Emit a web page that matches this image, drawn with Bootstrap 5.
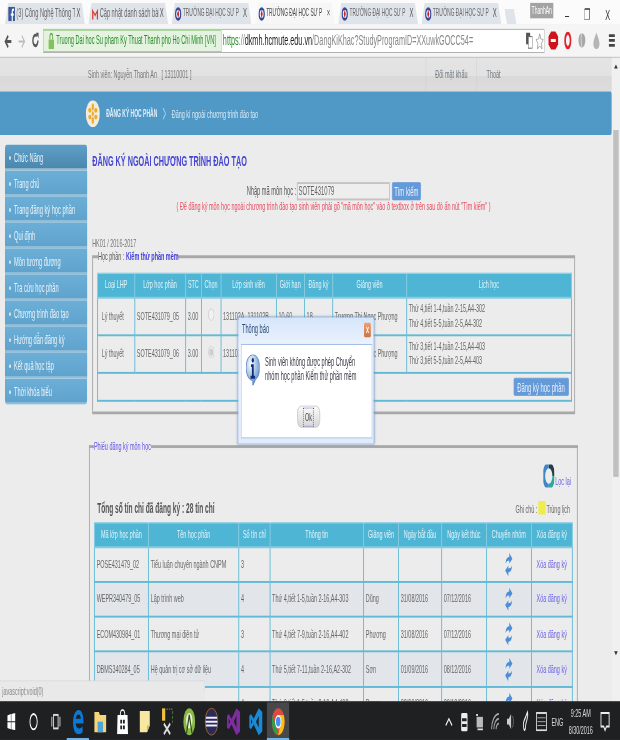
<!DOCTYPE html>
<html lang="vi">
<head>
<meta charset="utf-8">
<title>Đăng ký ngoài chương trình đào tạo</title>
<link rel="stylesheet" href="https://cdn.jsdelivr.net/npm/bootstrap@5.3.0/dist/css/bootstrap.min.css">
<style>
html,body{margin:0;width:620px;height:740px;overflow:hidden;background:#ececec}
body{font-family:"Liberation Sans",Arial,sans-serif;font-size:12px;color:#666}
.frame{width:620px;height:740px;overflow:hidden;filter:blur(.45px)}
.stage{width:1366px;height:768px;transform:scale(.4539,.9635);transform-origin:0 0;position:relative;overflow:hidden;background:#ececec}
.tabbar{height:25px;background:#fbfbfb;padding-left:11px}
.tabtab{width:176px;height:22px;margin-top:3px;margin-right:7.5px;padding:0 10px 0 7px;background:#dfe3ea;clip-path:polygon(0 100%,7px 0,calc(100% - 7px) 0,100% 100%);color:#666;font-size:12.5px;white-space:nowrap;overflow:hidden}
.tabtab.isactive{background:#f6f6f6;color:#444}
.tabtab .tname{flex:1;margin-left:3px;overflow:hidden}
.tabtab.capstab .tname{font-size:10.5px}
.tabtab .tx{color:#555;font-size:13px;margin-left:3px}
.newtab{width:27px;height:16px;margin-top:9px;background:#dfe3ea;margin-left:-1px;clip-path:polygon(0 0,calc(100% - 6px) 0,100% 100%,6px 100%)}
.userbtn{position:absolute;left:1168px;top:3px;width:51px;height:16px;background:#a3a3a3;color:#fff;text-align:center;line-height:16px;font-size:11px}
.winctl{position:absolute;top:4px;color:#333;font-size:16px;line-height:24px;width:28px;text-align:center}
.wmin{left:1235px}.wmax{left:1279px}.wcls{left:1325px}
.toolbar{height:35px;background:#f5f5f5;border-bottom:1px solid #b9b9b9;padding-left:3px}
.navbtn{width:30px;text-align:center}
.urlbox{width:1105px;height:25px;margin-left:2px;background:#fff;border:1px solid #b0b0b0;font-size:16px;color:#333;white-space:nowrap}
.evbadge{width:392px;height:23px;margin-right:3px;background:#e3f3df;border:1px solid #9ed092;color:#2b8a2b;font-size:12.4px;padding-left:9px}
.urlhttps{color:#2b8a2b}.urlhost{color:#222}.urlrest{color:#888}
.toolright{padding-right:1px;gap:6px}
.viewport{height:668px}
.pagecol{width:1348px;overflow:hidden}
.scrolltrack{width:18px;background:#f0f0f0}
.sbtop{width:0;height:0;border:4px solid transparent;border-top:0;border-bottom-color:#333;margin:7px auto 0}
.sbthumb{width:12px;height:360px;background:#c0c0c0;margin:64px auto 0}
.sbdown{width:0;height:0;border:4px solid transparent;border-bottom:0;border-top-color:#333;margin:181px auto 0}
.strip{height:35px;background:linear-gradient(#e4e4e4 0,#e2e2e2 55%,#d9d9d9 55%,#dcdcdc 100%);padding-left:194px;color:#777;line-height:35px;white-space:nowrap}
.stripcell{border-left:1px solid #cfcfcf;height:35px}
.cpass{width:112px;text-align:center}.cout{width:298px;padding-left:21px}
.bluebar{height:45px;background:#5098c6;color:#dcebf5;padding-left:189px;white-space:nowrap;border-radius:0 3px 3px 0}
.crumbmain{font-weight:700;font-size:11px;margin-left:14px;color:#e6f0f7}
.crumbsep{margin:0 12px}
.sidemenu{width:181px;margin:10px 0 0 11px;--bs-list-group-bg:transparent;--bs-list-group-border-width:0;--bs-list-group-border-radius:5px}
.sidemenu .list-group-item{height:27px;line-height:29px;padding:0 0 0 10px;background:linear-gradient(#6caed6,#5fa3cd);color:#eaf3f8;border-bottom:2px solid #8ec0dd;font-size:12.5px;white-space:nowrap;overflow:hidden}
.sidemenu .list-group-item.menuhead{background:linear-gradient(#5e9fc9,#4b87ad)}
.sidemenu .list-group-item::before{content:"";display:inline-block;width:4px;height:4px;border-radius:50%;background:#dfeef6;margin:0 7px 2px -1px}
.maincol{width:1064px;margin-left:11px}
.pagehead{font-size:16px;font-weight:700;color:#4646d2;margin:17px 0 0;line-height:20px;white-space:nowrap}
.searchrow{margin-top:11px;height:20px;color:#555;font-size:12.5px}
.codeinput{width:205px;height:19px;margin-left:1px;border:2px solid #c4c4c4;background:#eee;color:#666;font-size:13px;padding:0 2px}
.bluebtn{--bs-btn-color:#e8f0fb;--bs-btn-bg:#659ad9;--bs-btn-border-color:#659ad9;--bs-btn-hover-bg:#659ad9;--bs-btn-hover-color:#e8f0fb;--bs-btn-padding-x:0;--bs-btn-padding-y:0;--bs-btn-font-size:13px;--bs-btn-border-radius:2px;--bs-btn-line-height:17px}
.searchbtn{width:63px;height:19px;margin-left:5px}
.rednote{color:#e74b5c;margin-top:-1px;line-height:14px}
.termline{margin-top:24px;line-height:14px;color:#777}
.boxset{border:2px solid #a8a8a8;border-width:3px 2px 3px 2px;min-width:0;margin:0;height:171px}
.boxset legend{float:none;width:auto;font-size:12px;line-height:14px;margin:0 0 0 2px;padding:0;color:#555}
.subjname{color:#3d3ddb;font-weight:700}
.boxone{margin-top:0;padding:0 8px 0 9px}
.boxtwo{margin-top:26px;margin-left:-7px;width:1077px;height:400px;padding:0 9px 0 9px;border-bottom:0}
.boxset.boxtwo legend{color:#5f52e8;margin-left:0}
.regtable{table-layout:fixed;margin:0;--bs-table-bg:transparent;--bs-table-color:#666;--bs-border-color:#62bad6;border-color:#62bad6;border-width:2px;font-size:12px}
.regtable>:not(caption)>*>*{padding:0 4px;vertical-align:middle;border-width:1px 2px 2px 2px;border-color:#62bad6;line-height:15px}
.regtable thead th{background:#4fb5d5;color:#e4f4fa;font-weight:400;text-align:center;height:25px;white-space:nowrap;border-color:#83cbe1}
.t1{margin-top:10px;width:1043px}
.t1 tbody tr{height:39px}
.t1 td:first-child{padding-left:8px}
.t1 .footrow{height:29px}
.t1 .footrow td{padding:0 5px 0 0;text-align:right}
.sumbtn{display:block;margin-left:auto;width:121px;height:19px;--bs-btn-line-height:19px}
.tc{text-align:center}
.c1a{width:81.5px}.c1b{width:112px}.c1c{width:35px}.c1d{width:43px}.c1e{width:122px}.c1f{width:62px}.c1g{width:62px}.c1h{width:163px}.c1i{width:363px}
.t2{width:1053px}
.t2 tbody tr{height:36.3px}
.t2 tbody tr:nth-child(even) td{background:#e2e6ea}
.c2a{width:119px}.c2b{width:199px}.c2c{width:68.5px}.c2d{width:206.5px}.c2e{width:77px}.c2f{width:94.5px}.c2g{width:99px}.c2h{width:99px}.c2i{width:90px}
.delete{color:#6a60e6;text-decoration:none}
.refreshrow{height:24px;margin-top:12px;padding-right:4px}
.refreshlink{color:#6a60e6;line-height:14px;margin-left:2px;text-decoration:none}
.summary{height:24px;margin-top:6px;margin-bottom:6px}
.totaltext{font-size:14.5px;font-weight:700;color:#555;margin-left:7px;padding-top:5px}
.yellowmark{display:inline-block;width:16px;height:14px;background:#f0ec4a;margin:0 2px;vertical-align:-2px}
.notetext{color:#666;padding-right:6px;padding-top:7px}
.statusbub{position:absolute;left:0;top:706px;width:452px;height:23px;background:#e9e9e9;border:1px solid #d4d4d4;border-left:0;border-radius:0 3px 0 0;line-height:21px;padding-left:5px;color:#888;z-index:5}
.taskbar{height:40px;background:#1f2022;color:#ddd;position:relative;z-index:6;border-top:1px solid #2a2a2a}
.taskbtn{width:49px;height:39px;position:relative}
.taskbtn.ison::after{content:"";position:absolute;left:0;right:0;bottom:0;height:2px;background:#76b9ed}
.taskbtn.lit{background:#47484a}
.trayitem{width:34px;height:39px}
.traylang{width:36px;height:39px;font-size:12px}
.trayclock{width:67px;font-size:12px;line-height:18px;text-align:center}
.traynote{width:40px;height:39px;margin-right:13px}
.dlgbox{position:absolute;left:524px;top:329px;width:300px;height:132px;background:linear-gradient(#d6e6fb,#eef4fd 25%,#dfeafa);border:1px solid #a9c4e8;border-radius:3px;z-index:4;padding:0 3px 5px 6px;box-shadow:0 0 3px rgba(90,130,190,.5)}
.dlgtitle{height:27px;line-height:24px;color:#2d4a78;font-size:12.5px;padding-left:2px}
.dlgclose{position:absolute;right:6px;top:5px;width:15px;height:15px;border-radius:2px;background:linear-gradient(#f0a070,#d0703f);color:#fff;font-weight:700;font-size:12px;line-height:15px;text-align:center}
.dlgbody{background:#fff;border:1px solid #9fbce6;height:98px;padding:10px 8px 0 10px;color:#3a3a48}
.dlgmsg{line-height:14px;margin:1px 0 0 12px;font-size:12.4px}
.okbtn{display:block;width:50px;height:23px;margin:21px auto 0;padding:0;transform:translateX(3px);background:linear-gradient(#fafafa,#d6d6d6);border:1px solid #bcbcbc;border-radius:8px;color:#444;font-size:12px;line-height:18px}
.okinner{display:inline-block;border:1px dotted #4646c8;padding:0 3px;line-height:18px}
</style>
</head>
<body>
<div class="frame">
<div class="stage d-flex flex-column">
  <div class="tabbar d-flex flex-shrink-0">
    <div class="tabtab d-flex align-items-center"><svg width="15" height="15" viewBox="0 0 16 16"><rect width="16" height="16" rx="1" fill="#3b5998"/><path d="M11 16V10h2l.4-2.6H11V6c0-.8.3-1.3 1.3-1.3h1.2V2.3C13 2.2 12.3 2 11.5 2 9.6 2 8.3 3.2 8.3 5.4v2H6.2V10h2.1v6z" fill="#fff"/></svg><span class="tname">(3) Công Nghệ Thông Ti</span><span class="tx">X</span></div>
    <div class="tabtab d-flex align-items-center"><svg width="15" height="15" viewBox="0 0 16 16"><path d="M1 14V2l7 6 7-6v12h-3V7L8 11 4 7v7z" fill="#d8432f"/></svg><span class="tname">Cập nhật danh sách bài</span><span class="tx">X</span></div>
    <div class="tabtab capstab d-flex align-items-center"><svg width="15" height="15" viewBox="0 0 16 16"><circle cx="8" cy="8" r="7.5" fill="#2f4a9c"/><circle cx="8" cy="8" r="4.5" fill="#fff"/><path d="M8 3l2.5 5L8 13 5.500 8z" fill="#c8242c"/></svg><span class="tname">TRƯỜNG ĐẠI HỌC SƯ P</span><span class="tx">X</span></div>
    <div class="tabtab capstab isactive d-flex align-items-center"><svg width="15" height="15" viewBox="0 0 16 16"><circle cx="8" cy="8" r="7.5" fill="#2f4a9c"/><circle cx="8" cy="8" r="4.5" fill="#fff"/><path d="M8 3l2.5 5L8 13 5.500 8z" fill="#c8242c"/></svg><span class="tname">TRƯỜNG ĐẠI HỌC SƯ P</span><span class="tx">×</span></div>
    <div class="tabtab capstab d-flex align-items-center"><svg width="15" height="15" viewBox="0 0 16 16"><circle cx="8" cy="8" r="7.5" fill="#2f4a9c"/><circle cx="8" cy="8" r="4.5" fill="#fff"/><path d="M8 3l2.5 5L8 13 5.500 8z" fill="#c8242c"/></svg><span class="tname">TRƯỜNG ĐẠI HỌC SƯ P</span><span class="tx">X</span></div>
    <div class="tabtab capstab d-flex align-items-center"><svg width="15" height="15" viewBox="0 0 16 16"><circle cx="8" cy="8" r="7.5" fill="#2f4a9c"/><circle cx="8" cy="8" r="4.5" fill="#fff"/><path d="M8 3l2.5 5L8 13 5.500 8z" fill="#c8242c"/></svg><span class="tname">TRƯỜNG ĐẠI HỌC SƯ P</span><span class="tx">X</span></div>
    <div class="newtab"></div>
  </div>
  <div class="userbtn">ThanhAn</div>
  <div class="winctl wmin">–</div><div class="winctl wmax">❐</div><div class="winctl wcls">X</div>
  <div class="toolbar d-flex align-items-center flex-shrink-0">
    <div class="navbtn"><svg width="18" height="16" viewBox="0 0 18 16"><path d="M16 8H4M9 2 3 8l6 6" fill="none" stroke="#555" stroke-width="3"/></svg></div>
    <div class="navbtn"><svg width="18" height="16" viewBox="0 0 18 16"><path d="M2 8h12M9 2l6 6-6 6" fill="none" stroke="#bbb" stroke-width="2"/></svg></div>
    <div class="navbtn"><svg width="18" height="18" viewBox="0 0 18 18"><path d="M14.500 9A5.500 5.500 0 1 1 12 4.400" fill="none" stroke="#555" stroke-width="3"/><path d="M10 1h6v6z" fill="#555"/></svg></div>
    <div class="urlbox d-flex align-items-center">
      <div class="evbadge d-flex align-items-center flex-shrink-0"><svg class="me-1" width="14" height="18" viewBox="0 0 14 18"><path d="M4 8V5a3 3 0 0 1 6 0v3" fill="none" stroke="#6dae4f" stroke-width="2"/><rect x="1" y="8" width="12" height="10" fill="#86c25c"/></svg>Truong Dai hoc Su pham Ky Thuat Thanh pho Ho Chi Minh [VN]</div>
      <span class="urlhttps">https</span><span class="urlrest">://</span><span class="urlhost">dkmh.hcmute.edu.vn</span><span class="urlrest">/DangKiKhac?StudyProgramID=XXuwkGOCC54=</span>
      <div class="toolright d-flex align-items-center ms-auto">
        <svg width="16" height="18" viewBox="0 0 16 18"><rect x="1" y="1" width="9" height="12" fill="#555"/><rect x="6" y="5" width="9" height="12" fill="#fff" stroke="#666"/></svg>
        <svg width="18" height="19" viewBox="0 0 22 20"><path d="M11 1l3 6.500 7 .8-5.200 4.800L17.200 20 11 16.400 4.800 20l1.400-6.900L1 8.300l7-.8z" fill="#fff" stroke="#777"/></svg>
      </div>
    </div>
    <div class="d-flex align-items-center gap-2 flex-shrink-0 ms-2">
      <svg width="22" height="20" viewBox="0 0 28 24"><path d="M8 0h12l8 7v10l-8 7H8l-8-7V7z" fill="#d0121b"/><rect x="7" y="10" width="14" height="4" fill="#fff"/></svg>
      <svg class="ms-1" width="18" height="18" viewBox="0 0 22 24"><ellipse cx="11" cy="12" rx="8" ry="10" fill="none" stroke="#e0232c" stroke-width="5"/></svg>
      <svg class="ms-1" width="20" height="18" viewBox="0 0 24 24"><circle cx="12" cy="12" r="10" fill="#a8a8a8"/><path d="M12 2c-3 5-3 9 0 20" stroke="#fff" fill="none"/></svg>
      <svg class="ms-1" width="20" height="18" viewBox="0 0 24 24"><path d="M12 1c5 7 9 11 9 16a9 7 0 0 1-18 0C3 12 7 8 12 1z" fill="#b5b5b5"/></svg>
      <svg class="ms-2" width="16" height="16" viewBox="0 0 18 22"><path d="M0 4h18M0 11h18M0 18h18" stroke="#444" stroke-width="4"/></svg>
    </div>
  </div>
  <div class="viewport d-flex flex-shrink-0">
    <div class="pagecol">
      <div class="strip d-flex">
        <span>Sinh viên: Nguyễn Thanh An &nbsp; [ 13110001 ]</span>
        <a class="stripcell cpass ms-auto text-decoration-none text-secondary" href="#">Đổi mật khẩu</a>
        <a class="stripcell cout text-decoration-none text-secondary" href="#">Thoát</a>
      </div>
      <div class="bluebar d-flex align-items-center">
        <svg width="31" height="28" viewBox="0 0 31 28"><ellipse cx="15.500" cy="14" rx="15.500" ry="14" fill="#f2ecd8"/><g fill="#eeaa33"><ellipse cx="15.500" cy="7" rx="2.500" ry="3.500"/><ellipse cx="15.500" cy="21" rx="2.500" ry="3.500"/><ellipse cx="9" cy="10.500" rx="3.500" ry="2.500"/><ellipse cx="22" cy="10.500" rx="3.500" ry="2.500"/><ellipse cx="9" cy="17.500" rx="3.500" ry="2.500"/><ellipse cx="22" cy="17.500" rx="3.500" ry="2.500"/><circle cx="15.500" cy="14" r="2.500"/></g></svg>
        <span class="crumbmain">ĐĂNG KÝ HỌC PHẦN</span><svg class="crumbsep" width="8" height="14" viewBox="0 0 8 14"><path d="M1 1l6 6-6 6" fill="none" stroke="#dcebf5"/></svg><span>Đăng kí ngoài chương trình đào tạo</span>
      </div>
      <div class="d-flex">
        <div class="sidemenu list-group flex-shrink-0">
          <a class="list-group-item menuhead" href="#">Chức Năng</a>
          <a class="list-group-item" href="#">Trang chủ</a>
          <a class="list-group-item" href="#">Trang đăng ký học phần</a>
          <a class="list-group-item" href="#">Qui định</a>
          <a class="list-group-item" href="#">Môn tương đương</a>
          <a class="list-group-item" href="#">Tra cứu học phần</a>
          <a class="list-group-item" href="#">Chương trình đào tạo</a>
          <a class="list-group-item" href="#">Hướng dẫn đăng ký</a>
          <a class="list-group-item" href="#">Kết quả học tập</a>
          <a class="list-group-item" href="#">Thời khóa biểu</a>
        </div>
        <div class="maincol flex-shrink-0">
          <h1 class="pagehead">ĐĂNG KÝ NGOÀI CHƯƠNG TRÌNH ĐÀO TẠO</h1>
          <div class="searchrow d-flex justify-content-center align-items-center">Nhập mã môn học :<input class="codeinput" type="text" value="SOTE431079"><button class="btn bluebtn searchbtn" type="button">Tìm kiếm</button></div>
          <div class="rednote text-center">( Để đăng ký môn học ngoài chương trình đào tạo sinh viên phải gõ "mã môn học" vào ô textbox ở trên sau đó ấn nút "Tìm kiếm" )</div>
          <div class="termline">HK01 / 2016-2017</div>
          <fieldset class="boxset boxone">
            <legend>Học phần : <span class="subjname">Kiểm thử phần mềm</span></legend>
            <table class="table table-bordered regtable t1">
              <colgroup><col class="c1a"><col class="c1b"><col class="c1c"><col class="c1d"><col class="c1e"><col class="c1f"><col class="c1g"><col class="c1h"><col class="c1i"></colgroup>
              <thead><tr><th>Loại LHP</th><th>Lớp học phần</th><th>STC</th><th>Chọn</th><th>Lớp sinh viên</th><th>Giới hạn</th><th>Đăng ký</th><th>Giảng viên</th><th>Lịch học</th></tr></thead>
              <tbody>
                <tr><td>Lý thuyết</td><td>SOTE431079_05</td><td>3.00</td><td class="tc"><input type="radio" name="grp" disabled></td><td>131102A, 131102B</td><td>10-60</td><td>18</td><td>Trương Thị Ngọc Phượng</td><td>Thứ 4,tiết 1-4,tuần 2-15,A4-302<br>Thứ 4,tiết 5-5,tuần 2-5,A4-302</td></tr>
                <tr><td>Lý thuyết</td><td>SOTE431079_06</td><td>3.00</td><td class="tc"><input type="radio" name="grp" disabled checked></td><td>131102A, 131102B</td><td>10-60</td><td>18</td><td>Trương Thị Ngọc Phượng</td><td>Thứ 3,tiết 1-4,tuần 2-15,A4-403<br>Thứ 3,tiết 5-5,tuần 2-5,A4-403</td></tr>
                <tr class="footrow"><td colspan="9"><button class="btn bluebtn sumbtn" type="button">Đăng ký học phần</button></td></tr>
              </tbody>
            </table>
          </fieldset>
          <fieldset class="boxset boxtwo">
            <legend>Phiếu đăng ký môn học</legend>
            <div class="refreshrow d-flex justify-content-end align-items-end">
              <svg width="24" height="24" viewBox="0 0 24 24"><path d="M12 1a11 11 0 0 1 11 11" fill="none" stroke="#2b3a4a" stroke-width="6"/><path d="M23 12a11 11 0 0 1-11 11" fill="none" stroke="#2fa7a0" stroke-width="6"/><path d="M12 23A11 11 0 0 1 12 1" fill="none" stroke="#3d86c8" stroke-width="6"/><path d="M9 6l7 6-7 6z" fill="#e8eef2"/></svg>
              <a class="refreshlink" href="#">Lọc lại</a>
            </div>
            <div class="summary d-flex justify-content-between">
              <div class="totaltext">Tổng số tín chỉ đã đăng ký : 28 tín chỉ</div>
              <div class="notetext">Ghi chú :<span class="yellowmark"></span>Trùng lịch</div>
            </div>
            <table class="table table-bordered regtable t2">
              <colgroup><col class="c2a"><col class="c2b"><col class="c2c"><col class="c2d"><col class="c2e"><col class="c2f"><col class="c2g"><col class="c2h"><col class="c2i"></colgroup>
              <thead><tr><th>Mã lớp học phần</th><th>Tên học phần</th><th>Số tín chỉ</th><th>Thông tin</th><th>Giảng viên</th><th>Ngày bắt đầu</th><th>Ngày kết thúc</th><th>Chuyển nhóm</th><th>Xóa đăng ký</th></tr></thead>
              <tbody>
                <tr><td>POSE431479_02</td><td>Tiểu luận chuyên ngành CNPM</td><td>3</td><td></td><td></td><td></td><td></td><td class="tc"><svg width="18" height="24" viewBox="0 0 18 24"><path d="M2 11C2 6 6 4 10 4V0l7 6-7 5V8C7 8 4 8 2 11zM16 13c0 5-4 7-8 7v4l-7-6 7-5v3c3 0 6 0 8-3z" fill="#4a8fd8"/></svg></td><td class="tc"><a class="delete" href="#">Xóa đăng ký</a></td></tr>
                <tr><td>WEPR340479_05</td><td>Lập trình web</td><td>4</td><td>Thứ 4,tiết 1-5,tuần 2-16,A4-303</td><td>Dũng</td><td>31/08/2016</td><td>07/12/2016</td><td class="tc"><svg width="18" height="24" viewBox="0 0 18 24"><path d="M2 11C2 6 6 4 10 4V0l7 6-7 5V8C7 8 4 8 2 11zM16 13c0 5-4 7-8 7v4l-7-6 7-5v3c3 0 6 0 8-3z" fill="#4a8fd8"/></svg></td><td class="tc"><a class="delete" href="#">Xóa đăng ký</a></td></tr>
                <tr><td>ECOM430984_01</td><td>Thương mại điện tử</td><td>3</td><td>Thứ 4,tiết 7-9,tuần 2-16,A4-402</td><td>Phương</td><td>31/08/2016</td><td>07/12/2016</td><td class="tc"><svg width="18" height="24" viewBox="0 0 18 24"><path d="M2 11C2 6 6 4 10 4V0l7 6-7 5V8C7 8 4 8 2 11zM16 13c0 5-4 7-8 7v4l-7-6 7-5v3c3 0 6 0 8-3z" fill="#4a8fd8"/></svg></td><td class="tc"><a class="delete" href="#">Xóa đăng ký</a></td></tr>
                <tr><td>DBMS340284_05</td><td>Hệ quản trị cơ sở dữ liệu</td><td>4</td><td>Thứ 5,tiết 7-11,tuần 2-16,A2-302</td><td>Sơn</td><td>01/09/2016</td><td>08/12/2016</td><td class="tc"><svg width="18" height="24" viewBox="0 0 18 24"><path d="M2 11C2 6 6 4 10 4V0l7 6-7 5V8C7 8 4 8 2 11zM16 13c0 5-4 7-8 7v4l-7-6 7-5v3c3 0 6 0 8-3z" fill="#4a8fd8"/></svg></td><td class="tc"><a class="delete" href="#">Xóa đăng ký</a></td></tr>
                <tr><td>SOEN330679_03</td><td>Kiến trúc phần mềm</td><td>4</td><td>Thứ 6,tiết 1-5,tuần 2-16,A4-402</td><td>Dung</td><td>02/09/2016</td><td>09/12/2016</td><td class="tc"><svg width="18" height="24" viewBox="0 0 18 24"><path d="M2 11C2 6 6 4 10 4V0l7 6-7 5V8C7 8 4 8 2 11zM16 13c0 5-4 7-8 7v4l-7-6 7-5v3c3 0 6 0 8-3z" fill="#4a8fd8"/></svg></td><td class="tc"><a class="delete" href="#">Xóa đăng ký</a></td></tr>
              </tbody>
            </table>
          </fieldset>
        </div>
      </div>
    </div>
    <div class="scrolltrack flex-shrink-0">
      <div class="sbtop"></div>
      <div class="sbthumb"></div>
      <div class="sbdown"></div>
    </div>
  </div>
  <div class="dlgbox">
    <div class="dlgtitle">Thông báo</div>
    <div class="dlgclose">x</div>
    <div class="dlgbody">
      <div class="d-flex">
        <svg class="flex-shrink-0" width="30" height="32" viewBox="0 0 30 32"><defs><radialGradient id="infog" cx=".35" cy=".3" r=".8"><stop offset="0" stop-color="#fff"/><stop offset="1" stop-color="#4f86c8"/></radialGradient></defs><path d="M15 0a15 13.500 0 0 1 6 26l-6 6v-5A15 13.500 0 0 1 15 0z" fill="url(#infog)" stroke="#3f74b8"/><circle cx="15" cy="6" r="2.500" fill="#0f2f7a"/><path d="M11 10h6v12h3v3H10v-3h3v-9h-2z" fill="#0f2f7a"/></svg>
        <div class="dlgmsg">Sinh viên không được phép Chuyển<br>nhóm học phần Kiểm thử phần mềm</div>
      </div>
      <button class="okbtn" type="button"><span class="okinner">Ok</span></button>
    </div>
  </div>
  <div class="statusbub">javascript:void(0)</div>
  <div class="taskbar d-flex align-items-center flex-shrink-0">
    <div class="taskbtn d-flex align-items-center justify-content-center"><svg width="18" height="18" viewBox="0 0 18 18"><path d="M0 2.500 8 1v7.500H0zM9 1l9-1v8.500H9zM0 9.500h8V17l-8-1.500zM9 9.500h9V18l-9-1z" fill="#fff"/></svg></div>
    <div class="taskbtn d-flex align-items-center justify-content-center"><svg width="20" height="20" viewBox="0 0 20 20"><circle cx="10" cy="10" r="8" fill="none" stroke="#fff" stroke-width="2"/></svg></div>
    <div class="taskbtn d-flex align-items-center justify-content-center"><svg width="24" height="18" viewBox="0 0 24 18"><rect x="7" y="2" width="10" height="14" fill="none" stroke="#ddd" stroke-width="2"/><path d="M3 4v10M21 4v10" stroke="#999" stroke-width="3"/></svg></div>
    <div class="taskbtn ison d-flex align-items-center justify-content-center"><svg width="26" height="26" viewBox="0 0 26 26"><path d="M2 14C2 6 8 1 14 1c7 0 11 5 11 12v2H8c0 5 7 7 15 3v6c-4 2-7 2-10 2C6 26 2 21 2 14zM8 10h11c0-6-10-6-11 0z" fill="#0a78d6"/></svg></div>
    <div class="taskbtn d-flex align-items-center justify-content-center"><svg width="28" height="24" viewBox="0 0 28 24"><path d="M1 2h10l2 3h14v18H1z" fill="#f5d67a"/><rect x="8" y="12" width="12" height="11" fill="#4ea6dc"/></svg></div>
    <div class="taskbtn d-flex align-items-center justify-content-center"><svg width="28" height="26" viewBox="0 0 28 26"><path d="M3 6h22l1 20H2z" fill="#fff"/><path d="M9 6c0-7 10-7 10 0" fill="none" stroke="#fff" stroke-width="2"/><path d="M9 11h4v4H9zM15 11h4v4h-4zM9 17h4v4H9zM15 17h4v4h-4z" fill="#222"/></svg></div>
    <div class="taskbtn d-flex align-items-center justify-content-center"><svg width="26" height="24" viewBox="0 0 26 24"><path d="M2 1h22v15l-6 7H2z" fill="#f7e7a0"/><path d="M18 23v-7h6z" fill="#c9b56a"/></svg></div>
    <div class="taskbtn d-flex align-items-center justify-content-center"><svg width="30" height="28" viewBox="0 0 30 28"><rect x="4" y="0" width="7" height="13" fill="#f0c040"/><path d="M14 1h13v14" fill="none" stroke="#4a7a3a" stroke-width="2" stroke-dasharray="3 2"/><path d="M8 16l14 11M22 16 8 27" stroke="#ddd" stroke-width="3"/></svg></div>
    <div class="taskbtn d-flex align-items-center justify-content-center"><svg width="28" height="30" viewBox="0 0 28 30"><ellipse cx="14" cy="15" rx="13" ry="14" fill="#8ab848"/><ellipse cx="14" cy="14" rx="7" ry="8" fill="#e8f0d8"/><path d="M14 8 8 27M14 8l6 19" stroke="#2f4a18" stroke-width="2.500"/></svg></div>
    <div class="taskbtn d-flex align-items-center justify-content-center"><svg width="30" height="30" viewBox="0 0 30 30"><circle cx="15" cy="15" r="14" fill="#2a2a5c" stroke="#c27a20"/><path d="M3 11h24M2 15h26M3 19h24" stroke="#f0f0f8" stroke-width="2"/></svg></div>
    <div class="taskbtn d-flex align-items-center justify-content-center"><svg width="30" height="30" viewBox="0 0 30 30"><path d="M21 1l8 4v20l-8 4-11-11-6 5-4-2V9l4-2 6 5zM21 9l-6 6 6 6zM4 12v6l3-3z" fill="#7b2e9c"/></svg></div>
    <div class="taskbtn d-flex align-items-center justify-content-center"><svg width="30" height="30" viewBox="0 0 30 30"><path d="M21 1l8 4v20l-8 4-11-11-6 5-4-2V9l4-2 6 5zM21 9l-6 6 6 6zM4 12v6l3-3z" fill="#1a8ad4"/></svg></div>
    <div class="taskbtn ison lit d-flex align-items-center justify-content-center"><svg width="30" height="30" viewBox="0 0 30 30"><circle cx="15" cy="15" r="14" fill="#dd4b3e"/><path d="M15 29A14 14 0 0 1 3 8l7 12z" fill="#2f9e44"/><path d="M15 29a14 14 0 0 0 12-21H15l5 8z" fill="#f4c20d"/><circle cx="15" cy="15" r="7" fill="#fff"/><circle cx="15" cy="15" r="5" fill="#4a8af4"/></svg></div>
    <div class="d-flex align-items-center ms-auto">
      <div class="trayitem d-flex align-items-center justify-content-center"><svg width="18" height="10" viewBox="0 0 18 10"><path d="M2 9l7-7 7 7" fill="none" stroke="#eee" stroke-width="2"/></svg></div>
      <div class="trayitem d-flex align-items-center justify-content-center"><svg width="16" height="22" viewBox="0 0 16 22"><rect x="1" y="2" width="14" height="19" rx="2" fill="#eee"/><path d="M3 9h10M3 15h10" stroke="#222" stroke-width="3"/></svg></div>
      <div class="trayitem d-flex align-items-center justify-content-center"><svg width="18" height="20" viewBox="0 0 18 20"><rect x="2" y="5" width="14" height="11" fill="#bbb"/><path d="M1 3h4M4 18h12" stroke="#ddd" stroke-width="2"/></svg></div>
      <div class="trayitem d-flex align-items-center justify-content-center"><svg width="20" height="20" viewBox="0 0 20 20"><path d="M2 18A16 16 0 0 1 18 2M7 18A11 11 0 0 1 18 7M12 18a6 6 0 0 1 6-6" fill="none" stroke="#aaa" stroke-width="2"/></svg></div>
      <div class="trayitem d-flex align-items-center justify-content-center"><svg width="18" height="20" viewBox="0 0 18 20"><path d="M1 7h4l5-5v16l-5-5H1z" fill="#ccc"/><path d="M13 4c3 3 3 9 0 12" fill="none" stroke="#777"/></svg></div>
      <div class="trayitem d-flex align-items-center justify-content-center"><svg width="20" height="26" viewBox="0 0 20 26"><path d="M5 20c-4-7 4-10 8-17 3 5-3 9-4 14 0 5-3 6-4 3z" fill="none" stroke="#eee" stroke-width="2"/></svg></div>
      <div class="trayitem d-flex align-items-center justify-content-center"><svg width="24" height="20" viewBox="0 0 24 20"><rect x="1" y="1" width="22" height="18" fill="none" stroke="#ddd" stroke-width="2"/><path d="M3 6h18M3 10h18M3 14h18" stroke="#ddd"/></svg></div>
      <div class="traylang d-flex align-items-center justify-content-center">ENG</div>
      <div class="trayclock">9:25 AM<br>8/30/2016</div>
      <div class="traynote d-flex align-items-center justify-content-center"><svg width="22" height="22" viewBox="0 0 22 22"><path d="M2 2h18v14h-6l-3 4-3-4H2z" fill="none" stroke="#eee" stroke-width="2"/></svg></div>
    </div>
  </div>
</div>
</div>
</body>
</html>
